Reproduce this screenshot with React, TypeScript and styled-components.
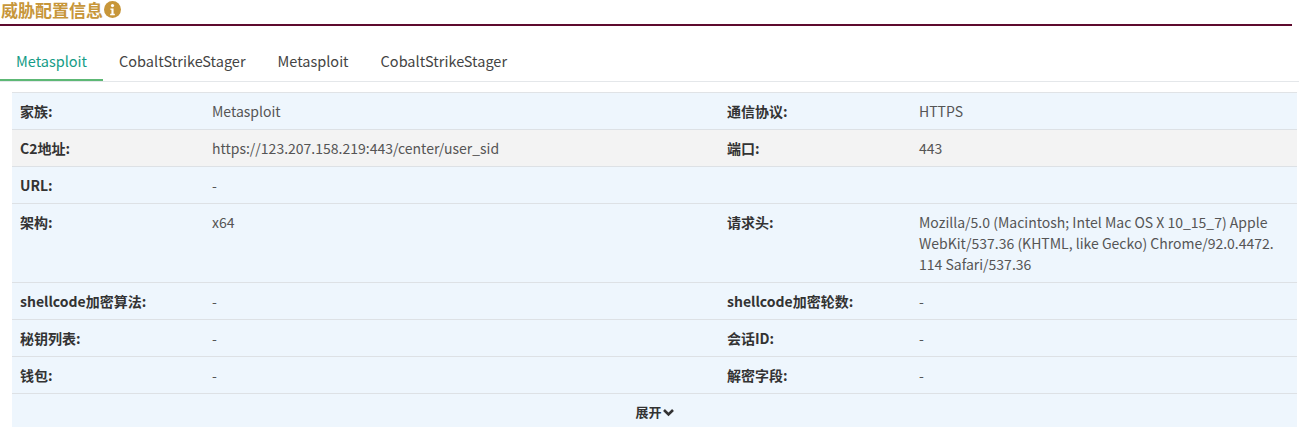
import React, { useState } from 'react';
import styled, { createGlobalStyle } from 'styled-components';

const GlobalStyle = createGlobalStyle`
  body {
    margin: 0;
    font-family: "Noto Sans CJK SC", "Noto Sans", sans-serif;
    background: #fff;
  }
`;

const Wrapper = styled.div`
  width: 1299px;
`;

const Title = styled.div`
  display: flex;
  align-items: flex-start;
  gap: 1px;
  margin-right: 7px;
  height: 26px;
  border-bottom: 2px solid #5e0a2e;
  color: #c7963a;
  font-size: 17px;
  font-weight: bold;
  line-height: 20px;
  box-sizing: border-box;
  padding-left: 1px;
`;

const TabBar = styled.div`
  display: flex;
  margin-top: 19px;
  border-bottom: 1px solid #e4e7ea;
`;

const Tab = styled.div<{ active?: boolean }>`
  padding: 0 16px;
  height: 36px;
  line-height: 32px;
  font-size: 14.5px;
  color: ${(p) => (p.active ? '#159c86' : '#444')};
  border-bottom: 2px solid ${(p) => (p.active ? '#5db875' : 'transparent')};
  box-sizing: border-box;
  cursor: pointer;
`;

const Table = styled.div`
  margin: 10px 2px 0 12px;
  display: grid;
  grid-template-columns: 192px 515px 192px 1fr;
  border-top: 1px solid #e0e3e6;
  font-size: 14px;
`;

const Cell = styled.div<{ label?: boolean; grey?: boolean }>`
  padding: 8px 8px 7px;
  line-height: 21px;
  background: ${(p) => (p.grey ? '#f3f3f3' : '#eef6fd')};
  border-bottom: 1px solid #dde1e5;
  color: ${(p) => (p.label ? '#333' : '#555')};
  font-weight: ${(p) => (p.label ? 'bold' : 'normal')};
  overflow-wrap: anywhere;
`;

const Expand = styled.div`
  grid-column: 1 / -1;
  background: #eef6fd;
  text-align: center;
  font-weight: bold;
  color: #333;
  font-size: 13px;
  height: 36px;
  line-height: 36px;
`;

const rows: [string, string, string, string][] = [
  ['家族:', 'Metasploit', '通信协议:', 'HTTPS'],
  ['C2地址:', 'https://123.207.158.219:443/center/user_sid', '端口:', '443'],
  ['URL:', '-', '', ''],
  [
    '架构:',
    'x64',
    '请求头:',
    'Mozilla/5.0 (Macintosh; Intel Mac OS X 10_15_7) Apple WebKit/537.36 (KHTML, like Gecko) Chrome/92.0.4472. 114 Safari/537.36',
  ],
  ['shellcode加密算法:', '-', 'shellcode加密轮数:', '-'],
  ['秘钥列表:', '-', '会话ID:', '-'],
  ['钱包:', '-', '解密字段:', '-'],
];

const tabs = ['Metasploit', 'CobaltStrikeStager', 'Metasploit', 'CobaltStrikeStager'];

export default function App() {
  const [active, setActive] = useState(0);
  return (
    <Wrapper>
      <GlobalStyle />
      <Title>
        威胁配置信息
        <svg width="17" height="17" viewBox="0 0 16 16" style={{ marginTop: 1 }}>
          <circle cx="8" cy="8" r="8" fill="#c7963a" />
          <circle cx="8" cy="4.3" r="1.5" fill="#fff" />
          <path d="M6 7h3v5h1.2v1.3H5.8V12H7V8.3H6z" fill="#fff" />
        </svg>
      </Title>
      <TabBar>
        {tabs.map((t, i) => (
          <Tab key={i} active={i === active} onClick={() => setActive(i)}>
            {t}
          </Tab>
        ))}
      </TabBar>
      <Table>
        {rows.map((r, i) => (
          <React.Fragment key={i}>
            <Cell label grey={i === 1}>{r[0]}</Cell>
            <Cell grey={i === 1}>{r[1]}</Cell>
            <Cell label grey={i === 1}>{r[2]}</Cell>
            <Cell grey={i === 1}>{r[3]}</Cell>
          </React.Fragment>
        ))}
        <Expand>
          展开
          <svg width="11" height="9" viewBox="0 0 11 9" style={{ marginLeft: 1 }}>
            <path d="M1 2l4.5 4.5L10 2" stroke="#333" strokeWidth="2.6" fill="none" />
          </svg>
        </Expand>
      </Table>
    </Wrapper>
  );
}
